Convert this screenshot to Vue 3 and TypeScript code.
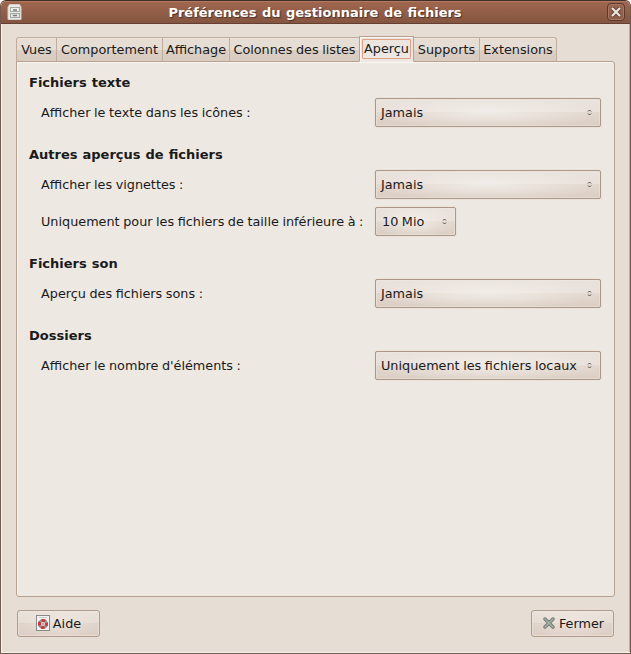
<script setup lang="ts">
interface Tab {
  label: string
  width: number
  active?: boolean
}

interface Preference {
  label: string
  value: string
  compact?: boolean
}

interface Section {
  title: string
  rows: Preference[]
}

const tabs: Tab[] = [
  { label: 'Vues', width: 41 },
  { label: 'Comportement', width: 107 },
  { label: 'Affichage', width: 68 },
  { label: 'Colonnes des listes', width: 131 },
  { label: 'Aperçu', width: 55, active: true },
  { label: 'Supports', width: 67 },
  { label: 'Extensions', width: 78 },
]

const sections: Section[] = [
  { title: 'Fichiers texte', rows: [{ label: 'Afficher le texte dans les icônes :', value: 'Jamais' }] },
  {
    title: 'Autres aperçus de fichiers',
    rows: [
      { label: 'Afficher les vignettes :', value: 'Jamais' },
      { label: 'Uniquement pour les fichiers de taille inférieure à :', value: '10 Mio', compact: true },
    ],
  },
  { title: 'Fichiers son', rows: [{ label: 'Aperçu des fichiers sons :', value: 'Jamais' }] },
  { title: 'Dossiers', rows: [{ label: "Afficher le nombre d'éléments :", value: 'Uniquement les fichiers locaux' }] },
]
</script>

<template>
  <div class="window">
    <header class="titlebar">
      <svg class="app-icon" width="16" height="18" viewBox="0 0 16 18">
        <path d="M2.500 1.500h10l1.500 2.500v12.500h-13v-12.500z" fill="#e9ebe7" stroke="#d2cec8" />
        <rect x="3.500" y="4.500" width="9" height="4" fill="#eef0ec" stroke="#a5a9a4" />
        <rect x="3.500" y="10.500" width="9" height="4" fill="#e3e6e1" stroke="#a5a9a4" />
        <path d="M6 7h4M6 12.500h4" stroke="#777d78" stroke-width="1.400" />
      </svg>
      <h1>Préférences du gestionnaire de fichiers</h1>
      <button class="close" aria-label="Fermer la fenêtre">
        <svg width="10" height="10" viewBox="0 0 10 10">
          <path d="M1 1 9 9M9 1 1 9" stroke="#5b3b2f" stroke-width="4" />
          <path d="M1 1 9 9M9 1 1 9" stroke="#eee4df" stroke-width="2.300" />
        </svg>
      </button>
    </header>

    <main class="content">
      <nav class="tabs">
        <button
          v-for="tab in tabs"
          :key="tab.label"
          class="tab"
          :class="{ active: tab.active }"
          :style="{ width: tab.width + 'px' }"
        >
          <span>{{ tab.label }}</span>
        </button>
      </nav>

      <div class="panel">
        <section v-for="section in sections" :key="section.title" class="section">
          <h2>{{ section.title }}</h2>
          <div v-for="row in section.rows" :key="row.label" class="row">
            <span class="label">{{ row.label }}</span>
            <button class="combo" :class="{ compact: row.compact }">
              <span>{{ row.value }}</span>
              <svg width="5" height="7" viewBox="0 0 5 7">
                <path d="M1 2.500 2.500 1 4 2.500M1 4.500 2.500 6 4 4.500" fill="none" stroke="#4b4540" />
              </svg>
            </button>
          </div>
        </section>
      </div>

      <footer class="actions">
        <button class="action">
          <svg width="14" height="16" viewBox="0 0 14 16">
            <rect x=".5" y=".5" width="13" height="15" fill="#f5f5f3" stroke="#858a86" />
            <path d="M3 2.500h8" stroke="#c9cdca" />
            <circle cx="7" cy="9" r="3.500" fill="#f5eeee" stroke="#8f9590" stroke-width="3" />
            <circle cx="7" cy="9" r="3.500" fill="none" stroke="#d3333b" stroke-width="3" stroke-dasharray="3.300 2.198" stroke-dashoffset="1.650" />
            <path d="M5.500 9h3M7 7.500v3" stroke="#c98f91" />
          </svg>
          <span>Aide</span>
        </button>
        <button class="action dismiss">
          <svg width="12" height="12" viewBox="0 0 12 12">
            <path d="M2 2 10 10M10 2 2 10" stroke="#6f7771" stroke-width="3.400" stroke-linecap="round" />
            <path d="M2 2 10 10M10 2 2 10" stroke="#a9b0aa" stroke-width="1.600" stroke-linecap="round" />
          </svg>
          <span>Fermer</span>
        </button>
      </footer>
    </main>
  </div>
</template>

<style>
body {
  margin: 0;
  background: #fff;
}
</style>

<style scoped>
* {
  box-sizing: border-box;
}

.window {
  width: 631px;
  height: 654px;
  overflow: hidden;
  border: 1px solid #6f5b50;
  border-top-color: #40302b;
  border-radius: 6px 6px 0 0;
  background: #e6ddd5;
  box-shadow: inset 1px -1px #faf4ef, inset -1px 0 #bbaea4;
  color: #1a1a1a;
  font: 12.8px/16px "DejaVu Sans", sans-serif;
  word-spacing: -0.5px;
}

button {
  margin: 0;
  padding: 0;
  color: inherit;
  font: inherit;
  word-spacing: inherit;
  white-space: nowrap;
}

svg {
  display: block;
  flex: none;
}

.titlebar {
  display: flex;
  align-items: center;
  height: 23px;
  padding: 0 5px 0 6px;
  border-bottom: 1px solid #653f31;
  border-radius: 5px 5px 0 0;
  background: linear-gradient(#a1674f, #845540);
  box-shadow: inset 0 1px #b27860;
}

.titlebar h1 {
  flex: 1;
  margin: 0;
  padding-top: 2px;
  color: #fff;
  font-size: 13px;
  word-spacing: 1px;
  text-align: center;
  text-shadow: 1px 1px 1px #4e3025;
}

.close {
  display: grid;
  place-items: center;
  width: 18px;
  height: 18px;
  border: 1px solid #583a2f;
  border-radius: 4px;
  background: linear-gradient(#9b6651, #8c5b47);
  box-shadow: inset 0 0 0 1px #aa7661;
}

.content {
  padding: 12px 15px 0;
}

.tabs {
  position: relative;
  z-index: 1;
  display: flex;
  align-items: flex-end;
  height: 26px;
}

.tab {
  display: flex;
  align-items: center;
  justify-content: center;
  height: 25px;
  margin-right: -1px;
  border: 1px solid #c1ad9f;
  border-bottom-color: #b8a091;
  background: linear-gradient(#e6ddd5 0 50%, #dbd0c6 50%, #d8cbc0);
  box-shadow: inset 0 1px #eee5dd;
}

.tab:first-child {
  border-top-left-radius: 3px;
}

.tab:last-child {
  border-top-right-radius: 3px;
}

.tab.active {
  z-index: 1;
  height: 26px;
  padding: 1px 0 2px;
  border-color: #b8a091;
  border-bottom-color: #ede8e2;
  background: linear-gradient(#ece5de, #ede8e2);
  box-shadow: inset 1px 1px #faf7f2;
}

.tab.active span {
  width: 49px;
  height: 20px;
  border: 1px solid #df9f87;
  border-radius: 1px;
  line-height: 18px;
}

.panel {
  height: 536px;
  margin-top: -1px;
  padding: 12px;
  border: 1px solid #b8a091;
  border-radius: 0 3px 3px 3px;
  background: #ede8e2;
  box-shadow: inset 1px 1px #faf7f2;
}

.section {
  display: grid;
  gap: 8px;
  margin-bottom: 19px;
}

.section h2 {
  height: 16px;
  margin: 0;
  font-size: 13px;
  line-height: 18px;
  word-spacing: 0.5px;
}

.row {
  display: grid;
  grid-template-columns: 334px 226px;
  align-items: center;
  height: 29px;
  padding-left: 12px;
}

.label {
  white-space: nowrap;
}

.combo {
  display: flex;
  align-items: center;
  justify-content: space-between;
  width: 226px;
  height: 29px;
  padding: 0 8px 0 5px;
  border: 1px solid #ab9888;
  border-radius: 2px;
  background:
    radial-gradient(ellipse 50% 65% at center, #f5f2eeb8, #f5f2ee00),
    linear-gradient(#e9e2dc, #e9e0da 48%, #e2d8cf 50%, #dbcdc3);
  box-shadow: inset 0 0 0 1px #eee7e080, 0 0 0 1px #e5ddd580;
}

.combo.compact {
  width: 81px;
  padding-left: 6px;
}

.actions {
  display: flex;
  justify-content: space-between;
  padding: 13px 1px 0 1px;
}

.action {
  display: flex;
  align-items: center;
  justify-content: center;
  gap: 3px;
  width: 83px;
  height: 27px;
  border: 1px solid #ae9c8e;
  border-radius: 3px;
  background:
    radial-gradient(ellipse 50% 60% at center, #f2ece690, #f2ece600),
    linear-gradient(#ebe2db, #e5dcd4 48%, #ded3ca 50%, #decfc5);
  box-shadow: inset 0 0 0 1px #f1e9e280;
}

.action svg {
  margin-top: -1px;
}

.dismiss {
  gap: 4px;
  padding-left: 2px;
}
</style>
